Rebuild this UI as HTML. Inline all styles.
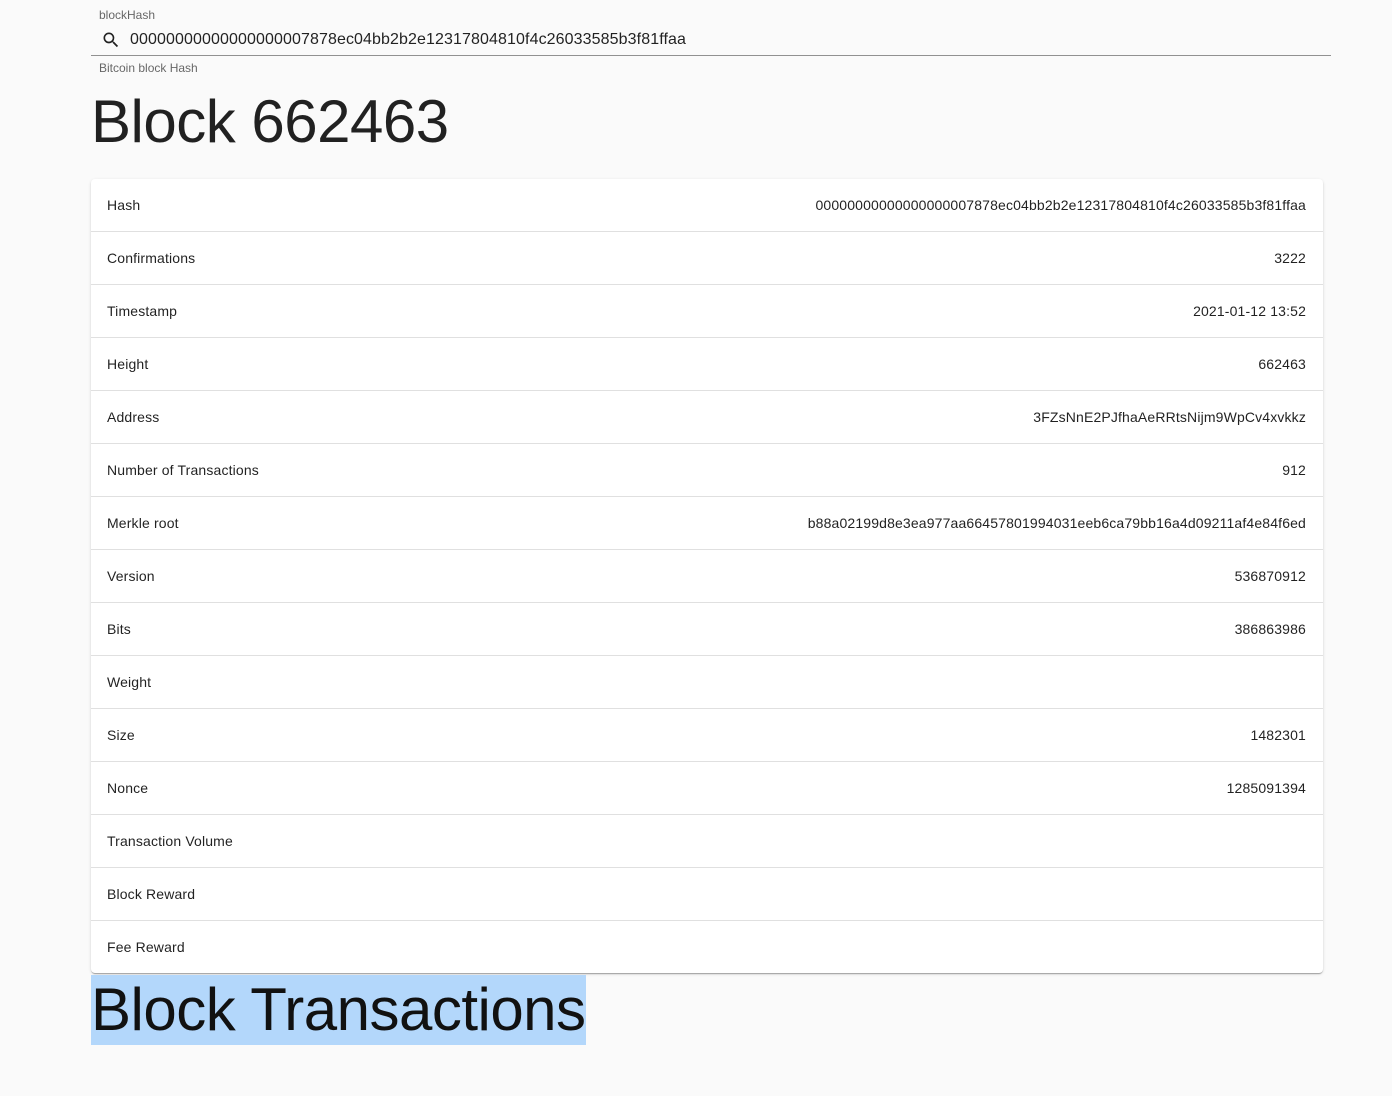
<!DOCTYPE html>
<html><head><style>
body{margin:0;background:#fafafa;font-family:"Liberation Sans",Arial,sans-serif;color:rgba(0,0,0,.87);width:1392px;height:1096px;overflow:hidden;position:relative}
.lbl{position:absolute;left:99px;top:8px;font-size:12px;color:rgba(0,0,0,.6)}
.inp{position:absolute;left:91px;top:25px;width:1240px;height:30px;border-bottom:1px solid rgba(0,0,0,.42)}
.inp svg{position:absolute;left:10px;top:5px}
.inp span{position:absolute;left:39px;top:6px;font-size:16px;letter-spacing:0.1px}
.help{position:absolute;left:99px;top:61px;font-size:12px;color:rgba(0,0,0,.6)}
h1{position:absolute;left:91px;margin:0;font-weight:300;font-size:60px;letter-spacing:-0.5px;line-height:70px}
.card{position:absolute;left:91px;top:179px;width:1232px;background:#fff;border-radius:4px;box-shadow:0 2px 1px -1px rgba(0,0,0,.2),0 1px 1px rgba(0,0,0,.14),0 1px 3px rgba(0,0,0,.12)}
.row{height:52px;border-bottom:1px solid rgba(224,224,224,1);display:flex;justify-content:space-between;align-items:center;padding:0 17px 0 16px;font-size:14px;letter-spacing:0.15px}
.row:last-child{border-bottom:none}
</style></head><body>
<div class="lbl">blockHash</div>
<div class="inp"><svg width="20" height="20" viewBox="0 0 24 24"><path fill="rgba(0,0,0,.87)" d="M15.5 14h-.79l-.28-.27A6.47 6.47 0 0016 9.5 6.5 6.5 0 109.5 16c1.610 0 3.09-.59 4.23-1.57l.27.28v.79l5 4.99L20.49 19l-4.99-5zm-6 0C7.01 14 5 11.99 5 9.5S7.01 5 9.5 5 14 7.01 14 9.5 11.99 14 9.5 14z"/></svg><span>00000000000000000007878ec04bb2b2e12317804810f4c26033585b3f81ffaa</span></div>
<div class="help">Bitcoin block Hash</div>
<h1 style="top:87px">Block 662463</h1>
<div class="card">
<div class="row"><span>Hash</span><span>00000000000000000007878ec04bb2b2e12317804810f4c26033585b3f81ffaa</span></div>
<div class="row"><span>Confirmations</span><span>3222</span></div>
<div class="row"><span>Timestamp</span><span>2021-01-12 13:52</span></div>
<div class="row"><span>Height</span><span>662463</span></div>
<div class="row"><span>Address</span><span>3FZsNnE2PJfhaAeRRtsNijm9WpCv4xvkkz</span></div>
<div class="row"><span>Number of Transactions</span><span>912</span></div>
<div class="row"><span>Merkle root</span><span>b88a02199d8e3ea977aa66457801994031eeb6ca79bb16a4d09211af4e84f6ed</span></div>
<div class="row"><span>Version</span><span>536870912</span></div>
<div class="row"><span>Bits</span><span>386863986</span></div>
<div class="row"><span>Weight</span><span></span></div>
<div class="row"><span>Size</span><span>1482301</span></div>
<div class="row"><span>Nonce</span><span>1285091394</span></div>
<div class="row"><span>Transaction Volume</span><span></span></div>
<div class="row"><span>Block Reward</span><span></span></div>
<div class="row"><span>Fee Reward</span><span></span></div>
</div>
<h1 style="top:975px;background:#b3d7fb;color:#111">Block Transactions</h1>
</body></html>
